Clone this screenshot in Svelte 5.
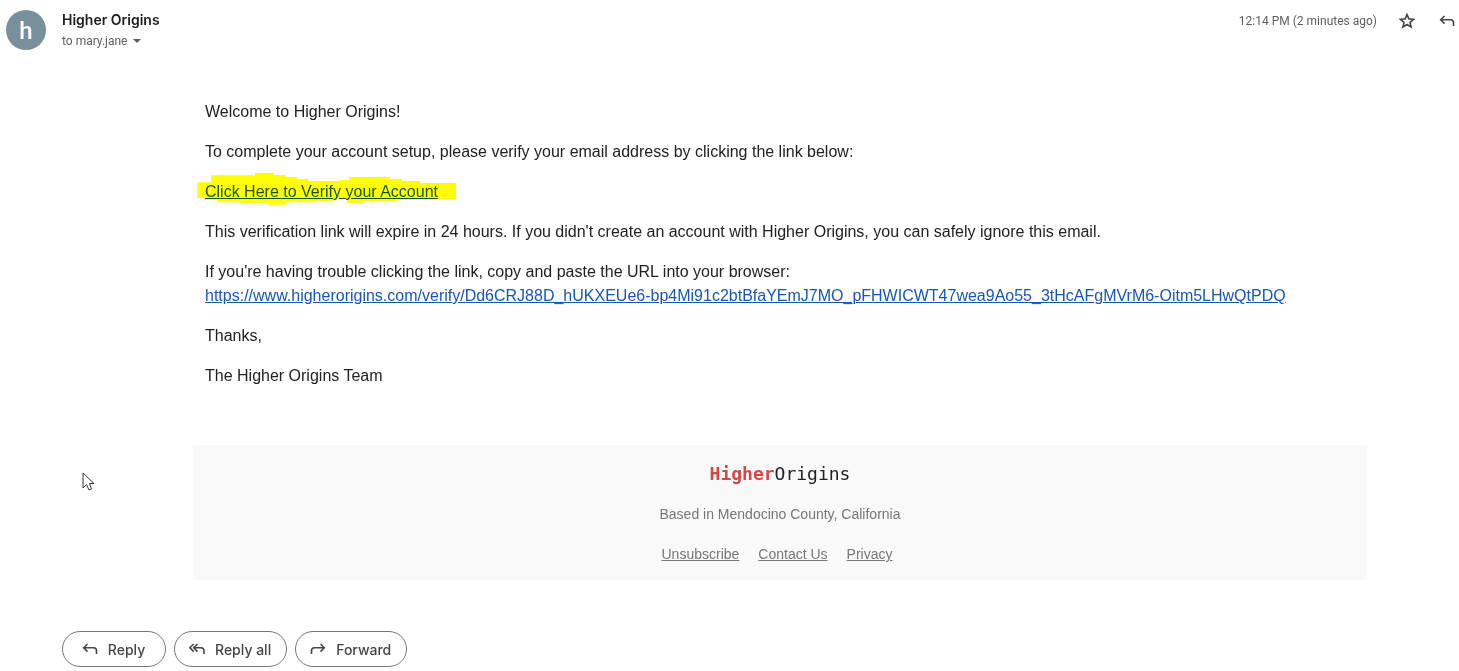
<script>
  const replyPath = 'M7.500 5 3.700 8.800l3.800 3.800M3.700 8.800h9.800a3 3 0 0 1 3 3v3.200';
  const verifyUrl =
    'https://www.higherorigins.com/verify/Dd6CRJ88D_hUKXEUe6-bp4Mi91c2btBfaYEmJ7MO_pFHWICWT47wea9Ao55_3tHcAFgMVrM6-Oitm5LHwQtPDQ';
  const actions = [
    { label: 'Reply', path: replyPath },
    { label: 'Reply all', path: 'M10.500 5 6.700 8.800l3.800 3.800M6.700 5 2.900 8.800l3.800 3.800M6.700 8.800h7.300a3 3 0 0 1 3 3v3.200' },
    { label: 'Forward', path: 'M12.500 5l3.800 3.800-3.800 3.800M16.300 8.800H6.500a3 3 0 0 0-3 3v3.200' }
  ];
  const footerLinks = ['Unsubscribe', 'Contact Us', 'Privacy'];
</script>

<main class="message">
  <header>
    <div class="avatar" aria-hidden="true">h</div>
    <div class="sender">
      <h1>Higher Origins</h1>
      <button class="recipient">
        to mary.jane
        <svg width="8" height="4" viewBox="0 0 8 4"><path d="M0 0h8L4 4z" fill="currentColor" /></svg>
      </button>
    </div>
    <div class="meta">
      <time>12:14 PM (2 minutes ago)</time>
      <button class="icon" aria-label="Star">
        <svg class="line" viewBox="0 0 20 20"><path d="M10 3.600l1.900 4.300 4.700.4-3.600 3.100 1.100 4.600-4.100-2.500-4.100 2.500 1.100-4.600-3.600-3.100 4.700-.4z" /></svg>
      </button>
      <button class="icon" aria-label="Reply">
        <svg class="line" viewBox="0 0 20 20"><path d={replyPath} /></svg>
      </button>
    </div>
  </header>

  <article>
    <p>Welcome to Higher Origins!</p>
    <p>To complete your account setup, please verify your email address by clicking the link below:</p>
    <p>
      <span class="marked">
        <a href="#verify">Click Here to Verify your Account</a>
        <svg class="marker" viewBox="21 24 780 96" aria-hidden="true">
          <path
            d="M22 52H63V31H195V24H250V30H285V36H320V42H355V48H450V46H478V36H600V42H635V48H690V54H798V102H740V104H622V108H520V114H470V102H430V108H370V112H290L285 119H232V114H150V112H80V104H45V99H22Z"
          />
        </svg>
      </span>
    </p>
    <p>This verification link will expire in 24 hours. If you didn't create an account with Higher Origins, you can safely ignore this email.</p>
    <p>If you're having trouble clicking the link, copy and paste the URL into your browser:<br /><a href="#verify">{verifyUrl}</a></p>
    <p>Thanks,</p>
    <p>The Higher Origins Team</p>
  </article>

  <footer>
    <div class="brand"><strong>Higher</strong>Origins</div>
    <div>Based in Mendocino County, California</div>
    <nav>
      {#each footerLinks as link}<a href="#footer">{link}</a>{/each}
    </nav>
  </footer>

  <div class="actions">
    {#each actions as action}
      <button>
        <svg class="line" viewBox="0 0 20 20"><path d={action.path} /></svg>
        {action.label}
      </button>
    {/each}
  </div>

  <svg class="cursor" viewBox="0 0 13 20" aria-hidden="true">
    <path d="M1 1v15l3.500-3.500 2.500 5.500 2.500-1L7.500 11.500H12z" />
  </svg>
</main>

<style>
  :global(body) {
    margin: 0;
    background: #fff;
  }
  .message {
    position: relative;
    padding: 10px 2px 4px 6px;
    color: #222;
    font-family: Inter, sans-serif;
  }
  button {
    font: inherit;
    color: inherit;
    background: none;
    border: 0;
    padding: 0;
    cursor: pointer;
  }
  header {
    display: flex;
    align-items: flex-start;
    gap: 16px;
  }
  .avatar {
    width: 40px;
    height: 40px;
    border-radius: 50%;
    background: #78909c;
    color: #fff;
    font: 500 24px/42px Roboto, sans-serif;
    text-align: center;
  }
  .sender {
    flex: 1;
  }
  h1 {
    margin: 0;
    color: #1f1f1f;
    font-size: 14px;
    font-weight: 600;
    line-height: 20px;
  }
  .recipient {
    display: flex;
    align-items: center;
    gap: 6px;
    color: #5e5e5e;
    font: 12px/22px Roboto, sans-serif;
  }
  .meta {
    display: flex;
    align-items: center;
    gap: 20px;
    color: #5e5e5e;
    font: 12px/22px Roboto, sans-serif;
  }
  .icon {
    display: flex;
    color: #444746;
  }
  .line {
    width: 20px;
    height: 20px;
    fill: none;
    stroke: currentColor;
    stroke-width: 1.6;
  }
  article {
    margin: 48px 102px 0 199px;
    font: 16px/24px "Liberation Sans", Arial, sans-serif;
  }
  p {
    margin: 0 0 16px;
  }
  article a {
    color: #1a56b8;
    overflow-wrap: anywhere;
  }
  .marked {
    position: relative;
    display: inline-block;
  }
  .marker {
    position: absolute;
    top: -7px;
    left: -8px;
    width: 260px;
    height: 32px;
    fill: #ff0;
    mix-blend-mode: multiply;
    pointer-events: none;
  }
  footer {
    display: flex;
    flex-direction: column;
    align-items: center;
    gap: 16px;
    margin: 57px 90px 0 187px;
    padding: 16px 16px 14px;
    background: #f9f9f9;
    color: #777;
    font: 14px/24px "Liberation Sans", Arial, sans-serif;
  }
  .brand {
    color: #222;
    font: 18px/25px "DejaVu Sans Mono", monospace;
  }
  .brand strong {
    color: #d64545;
  }
  nav {
    display: flex;
    gap: 19px;
    padding-right: 6px;
  }
  nav a {
    color: inherit;
  }
  .actions {
    display: flex;
    gap: 8px;
    margin: 51px 0 0 56px;
  }
  .actions button {
    display: flex;
    align-items: center;
    justify-content: center;
    gap: 8px;
    min-width: 104px;
    height: 36px;
    padding: 0 15px 0 12px;
    border: 1px solid #747775;
    border-radius: 18px;
    color: #444746;
    font-size: 14px;
    font-weight: 500;
  }
  .cursor {
    position: absolute;
    top: 472px;
    left: 82px;
    width: 13px;
    height: 20px;
    fill: #fff;
    stroke: #333;
  }
</style>
